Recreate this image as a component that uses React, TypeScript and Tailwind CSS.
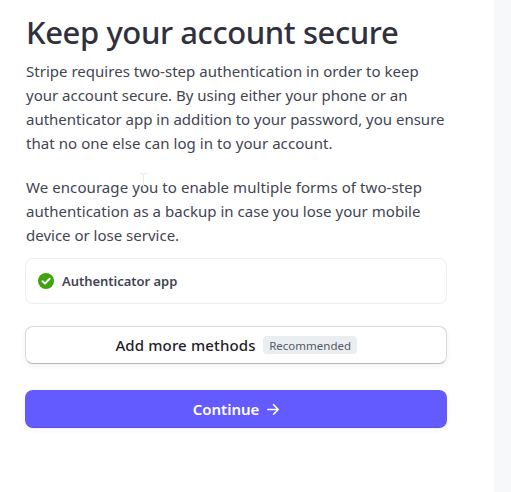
const intro = [
  { text: 'Stripe requires two-step authentication in order to keep', spacing: 'tracking-[0.02px]' },
  { text: 'your account secure. By using either your phone or an', spacing: 'tracking-[-0.01px]' },
  { text: 'authenticator app in addition to your password, you ensure', spacing: 'tracking-[0px]' },
  { text: 'that no one else can log in to your account.', spacing: 'tracking-[0.07px]' },
];

const backup = [
  { text: 'We encourage you to enable multiple forms of two-step', spacing: 'tracking-[0.075px]' },
  { text: 'authentication as a backup in case you lose your mobile', spacing: 'tracking-[0.03px]' },
  { text: 'device or lose service.', spacing: 'tracking-[0px]' },
];

function Paragraph({ lines }: { lines: { text: string; spacing: string }[] }) {
  return (
    <p className="text-[15px] leading-6 text-[#414552]">
      {lines.map((line) => (
        <span key={line.text} className={`block whitespace-nowrap ${line.spacing}`}>
          {line.text}
        </span>
      ))}
    </p>
  );
}

function CheckIcon() {
  return (
    <svg className="size-4 shrink-0" viewBox="0 0 16 16" fill="none">
      <circle cx="8" cy="8" r="8" fill="#3fa40d" />
      <path d="M4.5 8.3 7 10.6l4.6-4.8" stroke="#fff" strokeWidth="2" strokeLinecap="round" strokeLinejoin="round" />
    </svg>
  );
}

function ArrowIcon() {
  return (
    <svg className="h-3 w-3 shrink-0" viewBox="0 0 12 12" fill="none" stroke="#fff" strokeWidth="1.6" strokeLinecap="round" strokeLinejoin="round">
      <path d="M.8 6.5h10.4M6.6 1.7l4.6 4.8-4.6 4.8" />
    </svg>
  );
}

function TextCursor() {
  return (
    <svg className="absolute top-[172px] left-[140px] h-[20px] w-[7px]" viewBox="0 0 7 20" fill="none" stroke="#ebebeb">
      <path d="M0 1.5h3M4 1.5h3M3.5 2v15" />
    </svg>
  );
}

export default function App() {
  return (
    <div className="relative flex h-[492px] w-[511px] overflow-hidden bg-[#f6f8fa] font-['Noto_Sans','Open_Sans',sans-serif]">
      <main className="w-[494px] bg-white pt-3 pr-[47px] pl-[25px]">
        <h1 className="pl-px text-[31px] leading-10 font-[550] tracking-[-0.41px] whitespace-nowrap text-[#30313d]">
          Keep your account secure
        </h1>
        <div className="mt-[7px] flex flex-col gap-5 pl-px">
          <Paragraph lines={intro} />
          <Paragraph lines={backup} />
        </div>
        <div className="mt-[11px] flex h-[46px] items-center gap-2 rounded-lg border border-[#ebeef1] pl-3">
          <CheckIcon />
          <span className="pt-0.5 text-[13px] font-semibold tracking-[-0.03px] whitespace-nowrap text-[#414552]">
            Authenticator app
          </span>
        </div>
        <button className="mt-[22px] flex h-[38px] w-full items-center justify-center gap-[7px] rounded-lg border border-[#d8dadd] border-b-[#b9bcbf] bg-white shadow-[0_2px_5px_rgba(64,68,82,0.08)]">
          <span className="text-[15px] font-medium tracking-[0.14px] whitespace-nowrap text-[#1f212b]">
            Add more methods
          </span>
          <span className="flex h-[18px] w-[94px] items-center justify-center rounded bg-[#ebeef1] pt-px pl-px text-[11.5px] whitespace-nowrap text-[#545969]">
            Recommended
          </span>
        </button>
        <button className="mt-[26px] flex h-[38px] w-full items-center justify-center gap-2 rounded-lg bg-[#635bff] shadow-[inset_0_-1px_0_rgba(0,0,0,0.1),0_2px_5px_rgba(64,68,82,0.06)]">
          <span className="text-[15px] font-semibold whitespace-nowrap text-white">Continue</span>
          <ArrowIcon />
        </button>
      </main>
      <TextCursor />
    </div>
  );
}
